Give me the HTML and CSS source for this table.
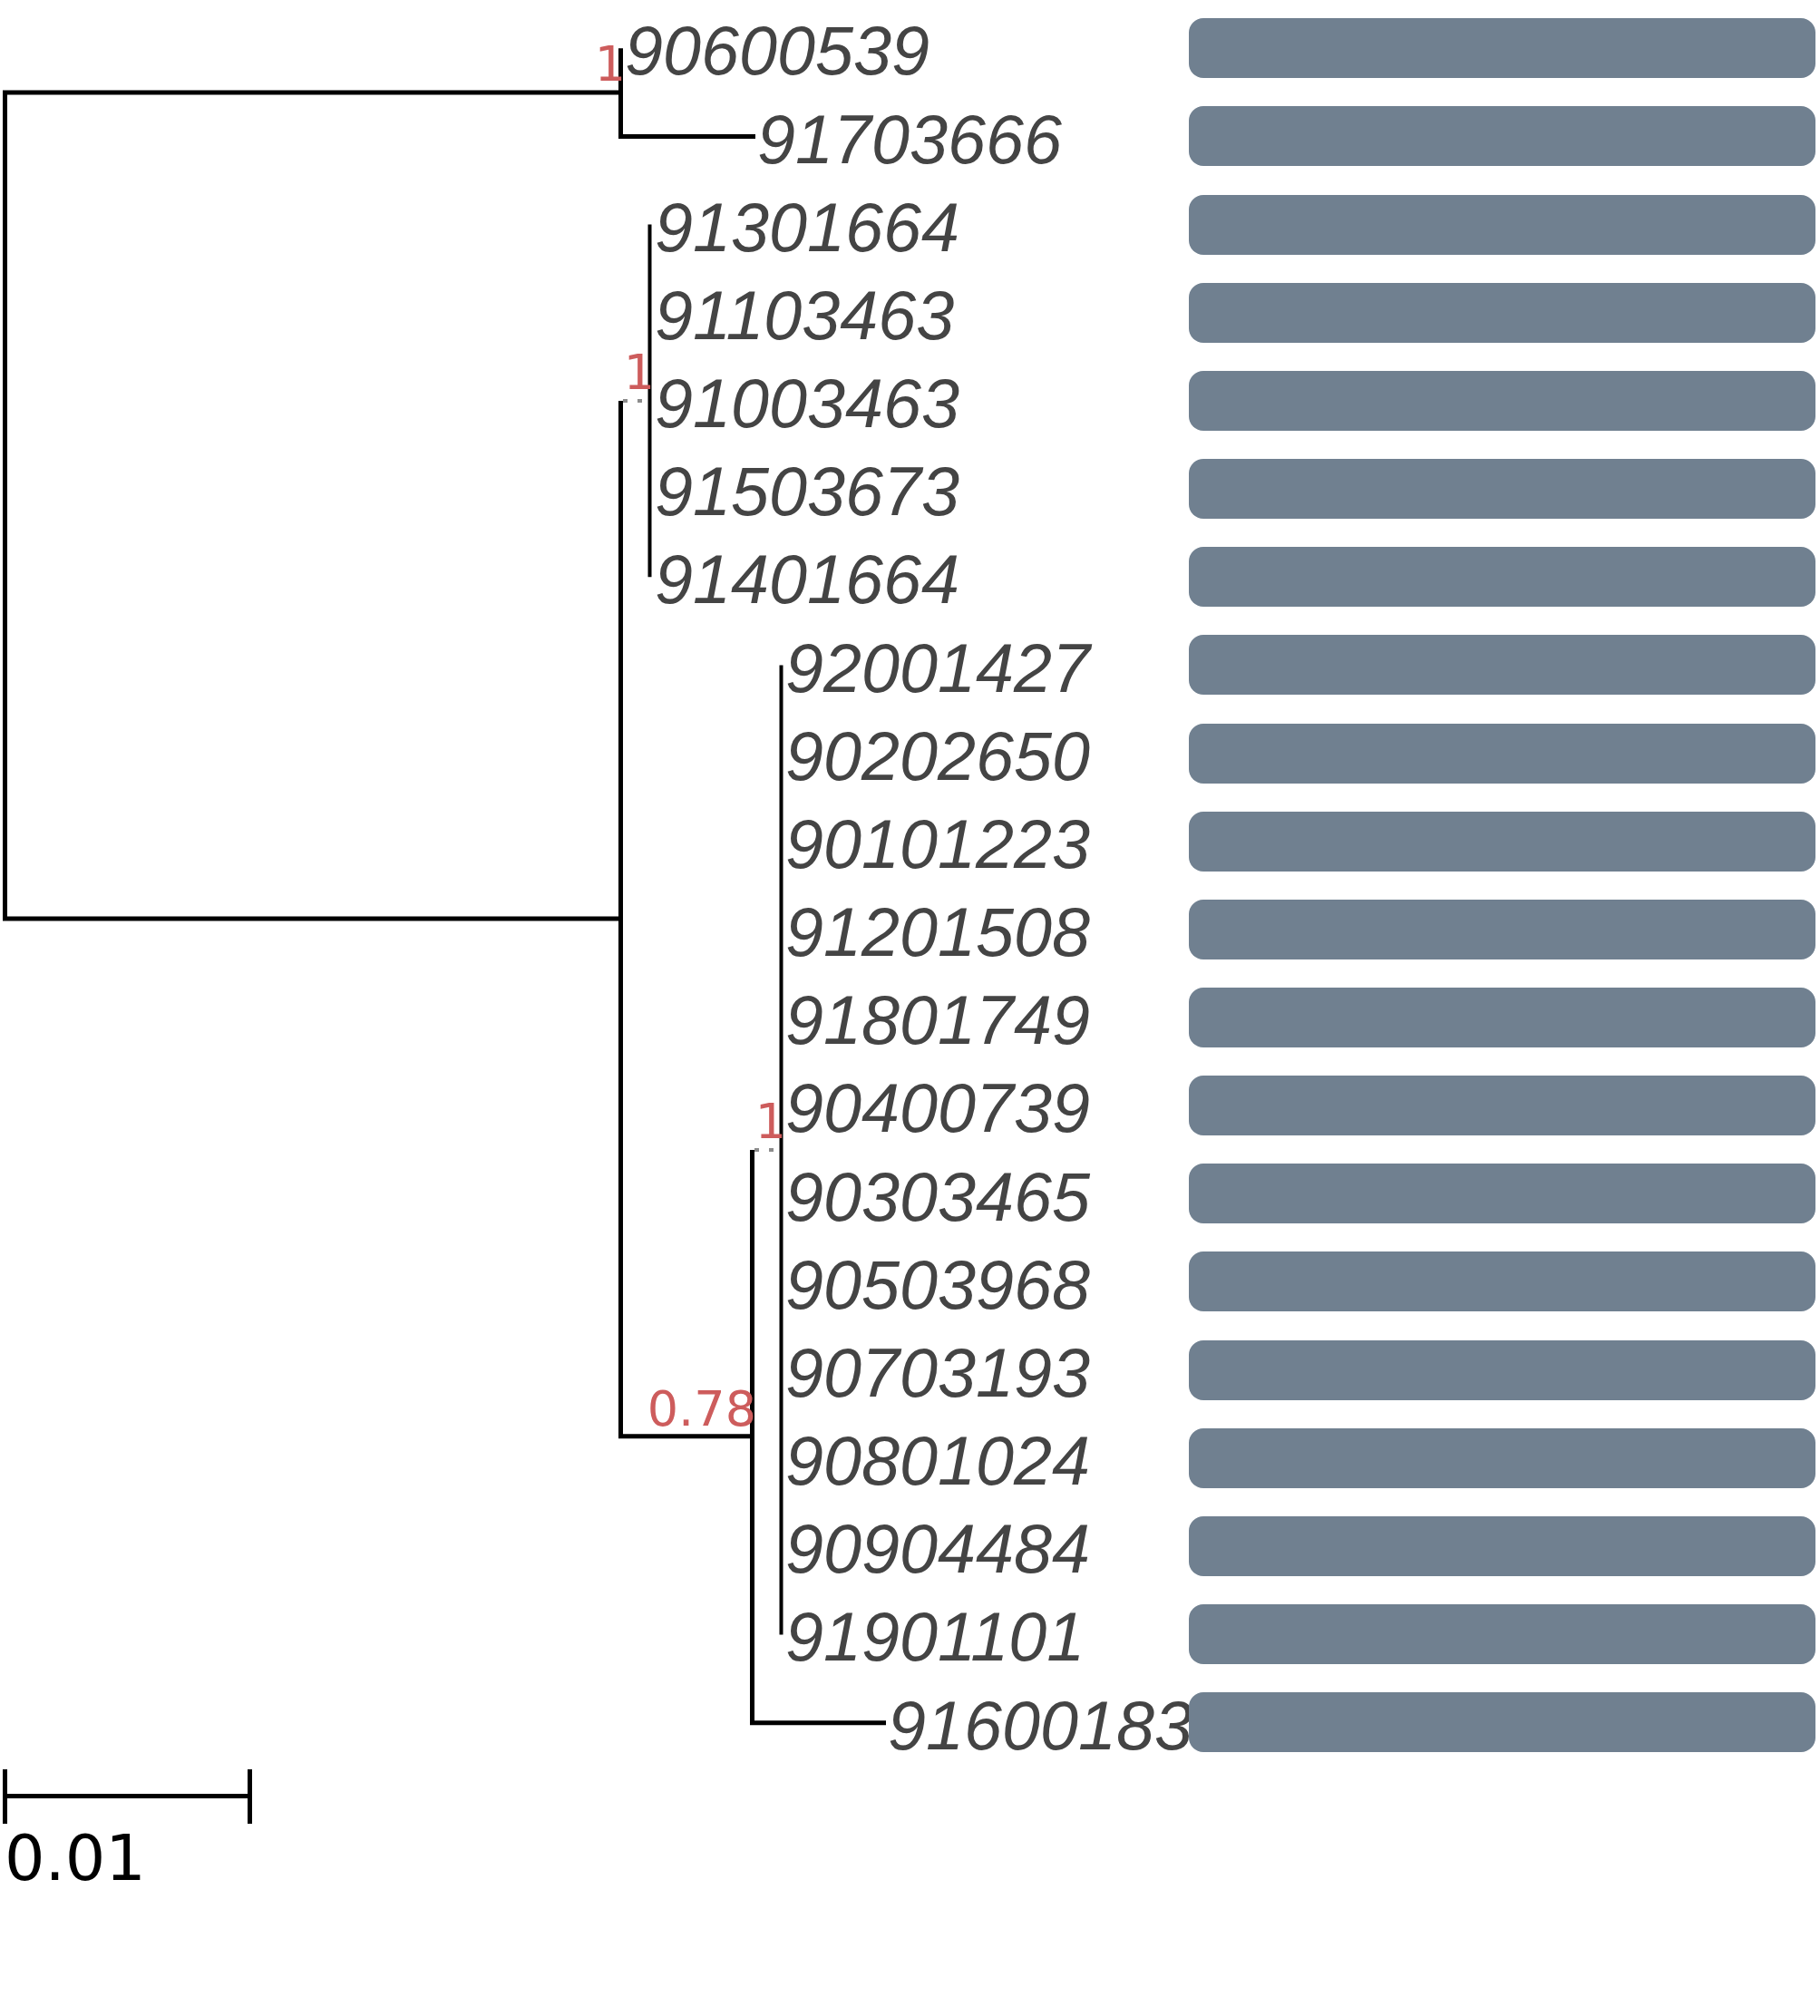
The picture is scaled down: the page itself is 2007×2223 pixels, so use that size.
FILE: index.html
```html
<!DOCTYPE html>
<html lang="en">
<head>
<meta charset="utf-8">
<title>Phylogenetic tree</title>
<link rel="stylesheet" href="styles.css">
</head>
<body>
<div class="page">
  <div class="figure">
    <svg class="tree" width="1311" height="1940" viewBox="0 0 1311 1940" xmlns="http://www.w3.org/2000/svg">
      <!-- branches -->
      <path class="branch" d="M684.5,101.9 H5.5 V1012.9 H684.5"/>
      <path class="branch" d="M684.5,53.3 V150.5 H833"/>
      <path class="branch" d="M684.5,442 V1583.7 H829.5"/>
      <path class="branch thin" d="M716.5,247.6 V636.3"/>
      <path class="branch" d="M829.5,1268 V1899.8 H977"/>
      <path class="branch thin" d="M861.5,733.5 V1802.4"/>
      <path class="dotted" d="M687,442 H714.5"/>
      <path class="dotted" d="M832,1268 H859.5"/>

      <!-- support values -->
      <text class="support" x="690" y="89">1</text>
      <text class="support" x="722" y="429">1</text>
      <text class="support" x="834" y="1572">0.78</text>
      <text class="support" x="867" y="1255">1</text>

      <!-- leaf labels -->
      <text class="leaf" x="689" y="82.3">90600539</text>
      <text class="leaf" x="835" y="179.5">91703666</text>
      <text class="leaf" x="722" y="276.6">91301664</text>
      <text class="leaf" x="722" y="373.8">91103463</text>
      <text class="leaf" x="722" y="471">91003463</text>
      <text class="leaf" x="722" y="568.2">91503673</text>
      <text class="leaf" x="722" y="665.3">91401664</text>
      <text class="leaf" x="866" y="762.5">92001427</text>
      <text class="leaf" x="866" y="859.7">90202650</text>
      <text class="leaf" x="866" y="956.8">90101223</text>
      <text class="leaf" x="866" y="1054">91201508</text>
      <text class="leaf" x="866" y="1151.2">91801749</text>
      <text class="leaf" x="866" y="1248.3">90400739</text>
      <text class="leaf" x="866" y="1345.5">90303465</text>
      <text class="leaf" x="866" y="1442.7">90503968</text>
      <text class="leaf" x="866" y="1539.9">90703193</text>
      <text class="leaf" x="866" y="1637">90801024</text>
      <text class="leaf" x="866" y="1734.2">90904484</text>
      <text class="leaf" x="866" y="1831.4">91901101</text>
      <text class="leaf" x="979" y="1928.5">91600183</text>
    </svg>
    <div class="bars">
      <div class="bar"></div>
      <div class="bar"></div>
      <div class="bar"></div>
      <div class="bar"></div>
      <div class="bar"></div>
      <div class="bar"></div>
      <div class="bar"></div>
      <div class="bar"></div>
      <div class="bar"></div>
      <div class="bar"></div>
      <div class="bar"></div>
      <div class="bar"></div>
      <div class="bar"></div>
      <div class="bar"></div>
      <div class="bar"></div>
      <div class="bar"></div>
      <div class="bar"></div>
      <div class="bar"></div>
      <div class="bar"></div>
      <div class="bar"></div>
    </div>
  </div>
  <svg class="scale" width="300" height="283" viewBox="0 0 300 283" xmlns="http://www.w3.org/2000/svg">
    <path class="branch" d="M5.5,11 V71 M5.5,40.5 H275.5 M275.5,11 V71"/>
    <text class="scale-label" x="5" y="133">0.01</text>
  </svg>
</div>
</body>
</html>
```

FILE: styles.css
```css
html, body {
  margin: 0;
  padding: 0;
  background: #ffffff;
}

.page {
  width: 2007px;
  display: flex;
  flex-direction: column;
}

.figure {
  display: flex;
  flex-direction: row;
  align-items: flex-start;
}

.tree {
  display: block;
  flex: 0 0 auto;
  overflow: visible;
}

.branch {
  fill: none;
  stroke: #000000;
  stroke-width: 5;
  stroke-linejoin: miter;
  stroke-linecap: butt;
}

.branch.thin {
  stroke-width: 4;
}

.dotted {
  fill: none;
  stroke: #8c8c8c;
  stroke-width: 4;
  stroke-dasharray: 5 11;
}

.support {
  font-family: "DejaVu Sans", sans-serif;
  font-size: 54px;
  fill: #cd5c5c;
  text-anchor: end;
}

.leaf {
  font-family: "Liberation Sans", Arial, sans-serif;
  font-style: italic;
  font-size: 75.5px;
  fill: #444444;
}

.bars {
  display: flex;
  flex-direction: column;
  gap: 31.17px;
  padding-top: 20.3px;
  width: 691px;
}

.bar {
  height: 66px;
  background: #708090;
  border-radius: 16px;
}

.scale {
  display: block;
}

.scale-label {
  font-family: "DejaVu Sans", sans-serif;
  font-size: 70px;
  fill: #000000;
}
```
